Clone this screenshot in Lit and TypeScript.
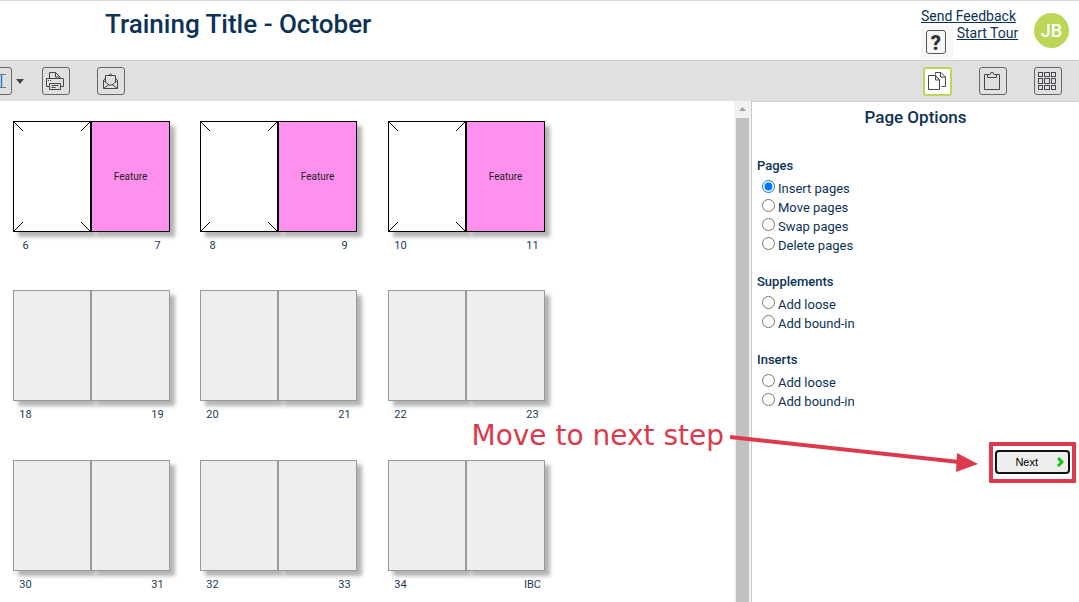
import { LitElement, html, css, svg, nothing } from "lit";
import { customElement, property, state } from "lit/decorators.js";

interface Spread {
  left: string;
  right: string;
  feature?: string;
}

const ROWS: Spread[][] = [
  [
    { left: "6", right: "7", feature: "Feature" },
    { left: "8", right: "9", feature: "Feature" },
    { left: "10", right: "11", feature: "Feature" },
  ],
  [
    { left: "18", right: "19" },
    { left: "20", right: "21" },
    { left: "22", right: "23" },
  ],
  [
    { left: "30", right: "31" },
    { left: "32", right: "33" },
    { left: "34", right: "IBC" },
  ],
];

const GROUPS = [
  { title: "Pages", options: ["Insert pages", "Move pages", "Swap pages", "Delete pages"] },
  { title: "Supplements", options: ["Add loose", "Add bound-in"] },
  { title: "Inserts", options: ["Add loose", "Add bound-in"] },
];

const ICONS: Record<string, unknown> = {
  text: svg`<path d="M9 2.500h9M9 15.500h9" stroke="#777"/><path d="M13.500 2.500v13" stroke="#2f7fc0" stroke-width="1.500"/>`,
  print: svg`<path d="M3.500 6.500v-6h6l4.500 4.500v1.500M9.500 .5v4.500h4.500M3.500 14.500h-3v-8h17v8h-3M3.500 11.500h11v6h-11zM5.500 13.500h7M5.500 15.500h4M2 8.500h1M4 8.500h1"/>`,
  mail: svg`<path d="M2.500 8v8.500h14v-8.500M4.500 10v-6.500h10v6.500M4.500 6l-2 2.500M14.500 6l2 2.500M2.500 8.500l5.500 4.500h3l5.500-4.500M2.500 16.500l5.500-4M16.500 16.500l-5.500-4M7.500 3.500l2-1.500 2 1.500"/>`,
  pages: svg`<path d="M7.500 3.500h-7v14h11v-9.500l-4-4.500v4.500h4M7.500 3.500l4 4.500M7.500 2.500v-2h5.500l4.500 4.500v9.500h-4M12.500 .5v4.500h5"/>`,
  clipboard: svg`<path d="M5 2.500h-3.500v15h15v-15h-3.500M4.500 5.500v-3h2.500l1-2h2l1 2h2.500v3z"/>`,
  grid: [0.5, 6.5, 13.5].map((y) =>
    [0.5, 6.5, 13.5].map(
      (x) => svg`<rect x=${x} y=${y} width=${x === 6.5 ? 5 : 4} height=${y === 6.5 ? 5 : 4} />`
    )
  ),
};

@customElement("tool-button")
class ToolButton extends LitElement {
  @property() icon = "";
  @property() label = "";
  @property({ type: Boolean }) active = false;

  static styles = css`
    :host { display: block; }
    .button {
      display: block;
      box-sizing: border-box;
      width: 28px;
      height: 28px;
      padding: 3px;
      border: 1px solid #666;
      border-radius: 3px;
      background: transparent;
      color: #46464c;
    }
    .active { width: 29px; height: 29px; border: 2px solid #bcd657; background: #fff; }
    .icon { display: block; fill: none; stroke: currentColor; stroke-width: 1; }
  `;

  render() {
    return html`<button class="button ${this.active ? "active" : ""}" aria-label=${this.label}>
      <svg class="icon" width="19" height="19" viewBox="0 0 19 19">${ICONS[this.icon]}</svg>
    </button>`;
  }
}

@customElement("page-spread")
class PageSpread extends LitElement {
  @property({ attribute: false }) spread!: Spread;

  static styles = css`
    :host { display: block; width: 157px; }
    .pages { display: grid; grid-template-columns: 78px 79px; height: 111px; }
    .page {
      display: grid;
      place-items: center;
      box-sizing: border-box;
      border: 1px solid #999;
      background: #eee;
      box-shadow: 5px 5px 4px #b4b4b4;
      color: #222;
      font-size: 10px;
    }
    .pages > :last-child { z-index: 1; }
    .filled { border-color: #000; background: #fff; }
    .feature { background: #ff90ee; }
    .marks { width: 100%; height: 100%; fill: none; stroke: #000; stroke-width: 1; }
    .numbers {
      display: flex;
      justify-content: space-between;
      padding-top: 6px;
      line-height: 16px;
      font-size: 11px;
      color: #1c3a58;
    }
    .number { width: 25px; text-align: center; }
  `;

  render() {
    const { left, right, feature } = this.spread;
    return html`
      <div class="pages">
        <div class="page ${feature ? "filled" : ""}">
          ${feature
            ? html`<svg class="marks" viewBox="0 0 76 109">
                <path d="M0 0l9 9M76 0l-9 9M0 109l9-9M76 109l-9-9" />
              </svg>`
            : nothing}
        </div>
        <div class="page ${feature ? "filled feature" : ""}">${feature ?? ""}</div>
      </div>
      <div class="numbers">
        <span class="number">${left}</span>
        <span class="number">${right}</span>
      </div>
    `;
  }
}

@customElement("page-options")
class PageOptions extends LitElement {
  @state() private selected = "0-0";

  static styles = css`
    :host {
      display: block;
      box-sizing: border-box;
      border-top: 1px solid #ccc;
      border-left: 1px solid #ccc;
      padding: 4px 5px 0;
      color: #0c3256;
    }
    .title { margin: 0 0 27px; text-align: center; font-size: 17px; line-height: 23px; font-weight: 500; }
    .group { margin: 0 0 17px; padding: 0; border: 0; }
    .legend { padding: 0; margin-bottom: 4px; font-size: 13px; line-height: 19px; font-weight: 500; }
    .option { display: flex; gap: 3px; padding-left: 5px; font-size: 13px; line-height: 19px; }
    .radio { width: 13px; height: 13px; margin: 1px 0 0; }
    .actions { display: flex; justify-content: flex-end; padding-top: 14px; margin-right: -2px; }
    .highlight { padding: 4px 2px 5px; border: 4px solid #dc3a4c; border-radius: 1px; }
    .next {
      display: flex;
      align-items: center;
      justify-content: flex-end;
      gap: 19px;
      box-sizing: border-box;
      width: 75px;
      height: 24px;
      padding: 0 4px;
      border: 2px solid #111;
      border-radius: 4px;
      background: #eee;
      color: #000;
      font: 11px "Liberation Sans", Arial, sans-serif;
    }
    .chevron { display: block; fill: none; stroke: #12c312; stroke-width: 3; }
  `;

  render() {
    return html`
      <h2 class="title">Page Options</h2>
      ${GROUPS.map(
        (group, g) => html`<fieldset class="group">
          <legend class="legend">${group.title}</legend>
          ${group.options.map((option, o) => {
            const id = `${g}-${o}`;
            return html`<label class="option">
              <input
                class="radio"
                type="radio"
                name="action"
                .checked=${this.selected === id}
                @change=${() => (this.selected = id)}
              />
              <span>${option}</span>
            </label>`;
          })}
        </fieldset>`
      )}
      <div class="actions">
        <div class="highlight">
          <button class="next">
            <span>Next</span>
            <svg class="chevron" width="7" height="10" viewBox="0 0 7 10"><path d="M1 1l4 4-4 4" /></svg>
          </button>
        </div>
      </div>
    `;
  }
}

@customElement("app-root")
class AppRoot extends LitElement {
  static styles = css`
    :host {
      display: flex;
      flex-direction: column;
      position: relative;
      box-sizing: border-box;
      height: 100vh;
      overflow: hidden;
      border-top: 1px solid #d8d8dc;
      background: #fff;
      color: #0c3256;
      font-family: Roboto, sans-serif;
    }
    .header { display: flex; justify-content: space-between; height: 59px; padding: 0 10px 0 105px; }
    .title { margin: 7px 0 0; font-size: 26px; line-height: 32px; font-weight: 500; }
    .account { display: flex; align-items: flex-start; gap: 14px; }
    .links { display: grid; grid-template-columns: auto auto; justify-content: end; padding-top: 7px; font-size: 14px; line-height: 17px; }
    .link { color: #0c3256; }
    .feedback { grid-column: 1 / -1; margin-right: 4px; justify-self: end; }
    .help-wrap { padding: 5px; margin-right: 4px; background: #f7f7f7; }
    .help {
      display: block;
      box-sizing: border-box;
      width: 20px;
      height: 24px;
      padding: 0;
      border: 1px solid #555;
      border-radius: 3px;
      background: #f7f7f7;
      color: #333;
      font: 900 20px Roboto, sans-serif;
    }
    .avatar {
      display: grid;
      place-items: center;
      width: 35px;
      height: 35px;
      margin-top: 12px;
      border-radius: 50%;
      background: #bcd657;
      color: #fff;
      font-size: 18px;
      font-weight: 500;
    }
    .toolbar {
      display: flex;
      align-items: center;
      justify-content: space-between;
      box-sizing: border-box;
      height: 41px;
      padding-right: 17px;
      border-top: 1px solid #ccc;
      background: #e0e0e0;
    }
    .tools { display: flex; align-items: center; gap: 27px; }
    .split { display: flex; align-items: center; gap: 4px; margin: 0 -9px 0 -16px; }
    .caret { fill: #444; }
    .body { display: grid; grid-template-columns: 1fr 17px 328px; flex: 1; min-height: 0; }
    .board { min-width: 0; overflow: hidden; padding: 20px 13px 0; }
    .row { display: grid; grid-template-columns: 187px 188px 187px; height: 169px; }
    .row + .row { height: 170px; }
    .scrollbar { display: flex; flex-direction: column; align-items: center; background: #f1f1f1; }
    .arrow-up { fill: #a3a3a3; margin: 6px 0 7px; }
    .thumb { flex: 1; width: 13px; background: #c1c1c1; }
    .callout {
      position: absolute;
      top: 416px;
      right: 101px;
      display: flex;
      gap: 5px;
      color: #dc3a4c;
      font: 28px/38px "DejaVu Sans", Verdana, sans-serif;
      white-space: nowrap;
      pointer-events: none;
    }
    .pointer { stroke: #dc3a4c; fill: #dc3a4c; margin-top: 14px; }
  `;

  render() {
    return html`
      <header class="header">
        <h1 class="title">Training Title - October</h1>
        <div class="account">
          <div class="links">
            <a class="link feedback" href="#feedback">Send Feedback</a>
            <span class="help-wrap"><button class="help" aria-label="Help">?</button></span>
            <a class="link" href="#tour">Start Tour</a>
          </div>
          <div class="avatar">JB</div>
        </div>
      </header>
      <nav class="toolbar">
        <div class="tools">
          <div class="split">
            <tool-button icon="text" label="Text"></tool-button>
            <svg class="caret" width="8" height="5" viewBox="0 0 8 5"><path d="M0 0h8L4 5z" /></svg>
          </div>
          <tool-button icon="print" label="Print"></tool-button>
          <tool-button icon="mail" label="Mail"></tool-button>
        </div>
        <div class="tools">
          <tool-button icon="pages" label="Pages" active></tool-button>
          <tool-button icon="clipboard" label="Clipboard"></tool-button>
          <tool-button icon="grid" label="Grid"></tool-button>
        </div>
      </nav>
      <main class="body">
        <section class="board">
          ${ROWS.map(
            (row) => html`<div class="row">
              ${row.map((spread) => html`<page-spread .spread=${spread}></page-spread>`)}
            </div>`
          )}
        </section>
        <div class="scrollbar">
          <svg class="arrow-up" width="7" height="4" viewBox="0 0 7 4"><path d="M0 4h7L3.500 0z" /></svg>
          <div class="thumb"></div>
        </div>
        <page-options></page-options>
      </main>
      <div class="callout">
        <span>Move to next step</span>
        <svg class="pointer" width="249" height="42" viewBox="0 0 249 42">
          <path d="M1 6L230 31" stroke-width="4" />
          <path d="M228 22L249 33L227 41z" stroke="none" />
        </svg>
      </div>
    `;
  }
}
